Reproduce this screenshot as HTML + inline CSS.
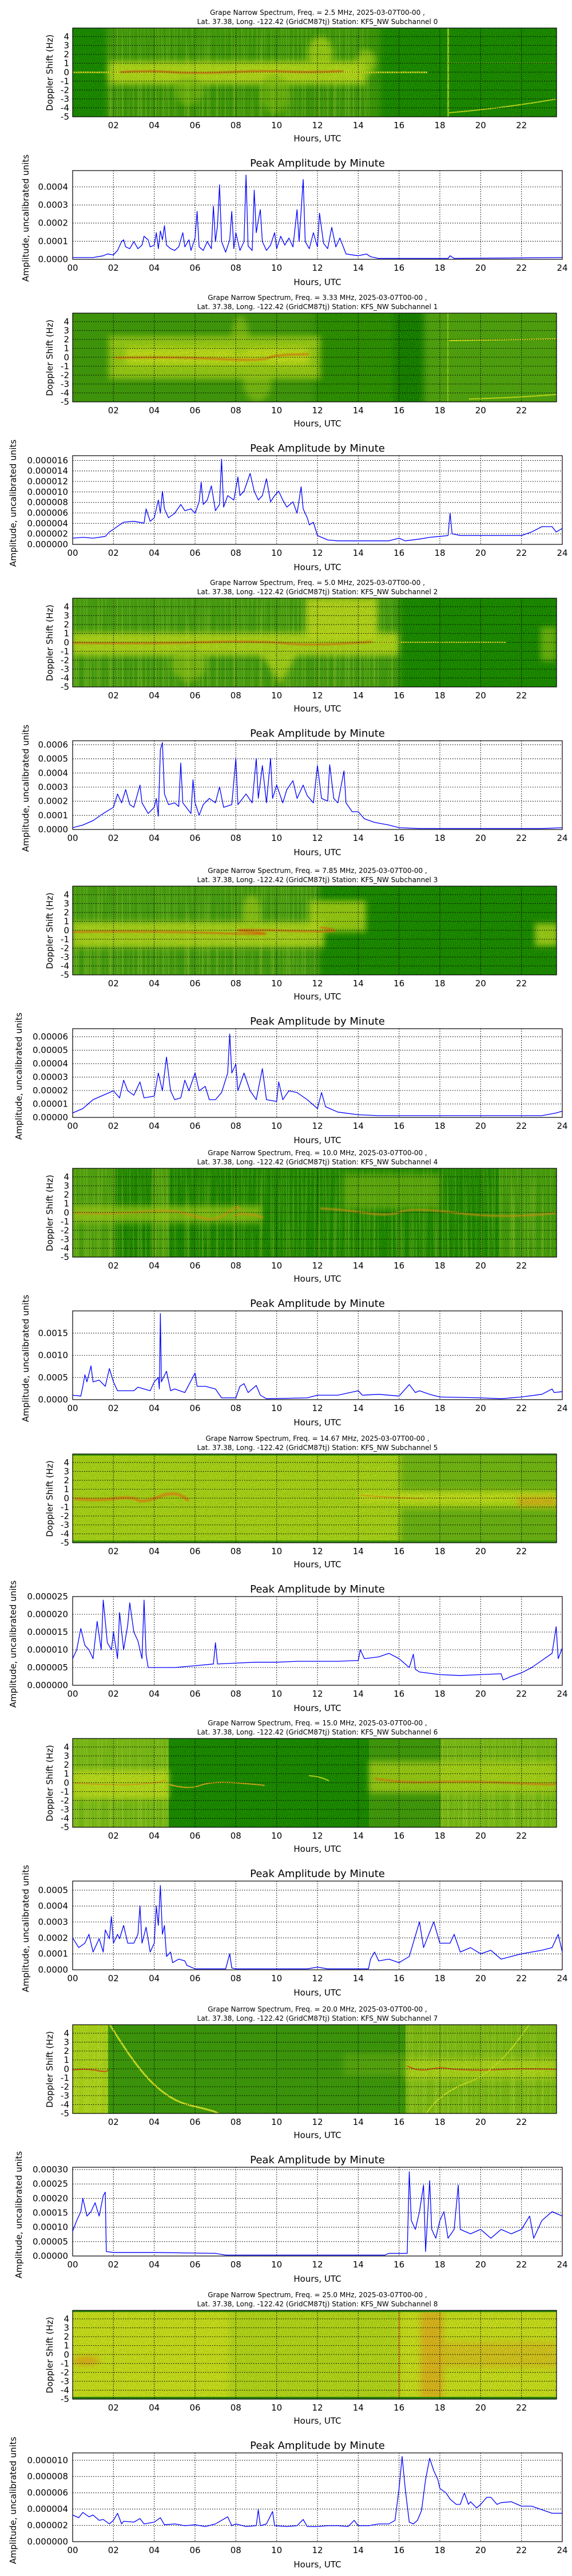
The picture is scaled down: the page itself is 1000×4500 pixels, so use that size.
<!DOCTYPE html>
<html><head><meta charset="utf-8"><style>
html,body{margin:0;padding:0;background:#fff;width:1000px;height:4500px;overflow:hidden}
svg text{font-family:"DejaVu Sans","Liberation Sans",sans-serif;fill:#000}
.tt{font-size:12px;text-anchor:middle}
.tk{font-size:15px}
.tm{font-size:15px;text-anchor:middle}
.te{font-size:15px;text-anchor:end}
.pt{font-size:18px;text-anchor:middle}
.gd{stroke:#000;stroke-width:1.1;stroke-dasharray:1.5,2.5;fill:none}
.fr{fill:none;stroke:#000;stroke-width:1.2}
.ln{fill:none;stroke:#0000ff;stroke-width:1.3;vector-effect:non-scaling-stroke;stroke-linejoin:round}
.st{filter:url(#s);opacity:.3}
</style></head><body>
<svg width="1000" height="4500" viewBox="0 0 1000 4500" xmlns="http://www.w3.org/2000/svg">
<defs>
<clipPath id="sc" clipPathUnits="userSpaceOnUse"><rect x="127" y="0" width="846" height="155"/></clipPath>
<filter id="b" x="-20%" y="-50%" width="140%" height="200%"><feGaussianBlur stdDeviation="5"/></filter>
<filter id="b2" x="-20%" y="-50%" width="140%" height="200%"><feGaussianBlur stdDeviation="1.2"/></filter>
<filter id="n" x="0" y="0" width="1" height="1"><feTurbulence type="fractalNoise" baseFrequency="0.8" numOctaves="2" seed="3"/><feColorMatrix type="matrix" values="0 0 0 0 0.05  0 0 0 0 0.42  0 0 0 0 0  5 0 0 0 -2.2"/></filter>
<filter id="s" x="0" y="0" width="1" height="1"><feTurbulence type="fractalNoise" baseFrequency="0.45 0.004" numOctaves="2" seed="7"/><feColorMatrix type="matrix" values="0 0 0 0 0.85  0 0 0 0 0.88  0 0 0 0 0.1  5 0 0 0 -2.4"/><feGaussianBlur stdDeviation="0.6"/></filter>
<g id="sgrid">
<path class="gd" d="M198.3 0V155M269.7 0V155M341 0V155M412.3 0V155M483.7 0V155M555 0V155M626.3 0V155M697.7 0V155M769 0V155M840.3 0V155M911.7 0V155M127 139.4H973M127 123.8H973M127 108.3H973M127 92.7H973M127 77.1H973M127 61.5H973M127 45.9H973M127 30.4H973M127 14.8H973"/>
<rect class="fr" x="127" y="0" width="846" height="155"/>
<text class="te" x="121" y="20">4</text><text class="te" x="121" y="35.5">3</text><text class="te" x="121" y="51">2</text><text class="te" x="121" y="66.7">1</text><text class="te" x="121" y="82.3">0</text><text class="te" x="121" y="97.9">-1</text><text class="te" x="121" y="113.5">-2</text><text class="te" x="121" y="129">-3</text><text class="te" x="121" y="144.6">-4</text><text class="te" x="121" y="160.2">-5</text>
<text class="tm" x="198.3" y="175">02</text><text class="tm" x="269.7" y="175">04</text><text class="tm" x="341" y="175">06</text><text class="tm" x="412.3" y="175">08</text><text class="tm" x="483.7" y="175">10</text><text class="tm" x="555" y="175">12</text><text class="tm" x="626.3" y="175">14</text><text class="tm" x="697.7" y="175">16</text><text class="tm" x="769" y="175">18</text><text class="tm" x="840.3" y="175">20</text><text class="tm" x="911.7" y="175">22</text>
<text class="tm" x="555" y="198">Hours, UTC</text>
<text class="tk" text-anchor="middle" transform="translate(92,78) rotate(-90)">Doppler Shift (Hz)</text>
<text class="pt" x="555" y="242">Peak Amplitude by Minute</text>
<path class="gd" d="M198.3 249V404M269.7 249V404M341 249V404M412.3 249V404M483.7 249V404M555 249V404M626.3 249V404M697.7 249V404M769 249V404M840.3 249V404M911.7 249V404"/>
<text class="tm" x="127" y="424">00</text><text class="tm" x="198.3" y="424">02</text><text class="tm" x="269.7" y="424">04</text><text class="tm" x="341" y="424">06</text><text class="tm" x="412.3" y="424">08</text><text class="tm" x="483.7" y="424">10</text><text class="tm" x="555" y="424">12</text><text class="tm" x="626.3" y="424">14</text><text class="tm" x="697.7" y="424">16</text><text class="tm" x="769" y="424">18</text><text class="tm" x="840.3" y="424">20</text><text class="tm" x="911.7" y="424">22</text><text class="tm" x="983" y="424">24</text>
<text class="tm" x="555" y="449">Hours, UTC</text>
</g>
</defs>

<!-- ============ CH0 ============ -->
<g transform="translate(0,49)">
<text class="tt" x="555" y="-23">Grape Narrow Spectrum, Freq. = 2.5 MHz, 2025-03-07T00-00 ,</text>
<text class="tt" x="555" y="-7">Lat.  37.38, Long. -122.42 (GridCM87tj) Station: KFS_NW Subchannel 0</text>
<g clip-path="url(#sc)">
<rect x="127" y="0" width="846" height="155" fill="#127b00"/>
<rect x="185" y="-10" width="480" height="175" fill="#3f8f0e" filter="url(#b)" opacity=".85"/>
<rect x="186" y="0" width="460" height="155" class="st"/>
<rect x="190" y="58" width="450" height="40" fill="#d4df22" filter="url(#b)" opacity=".85"/>
<ellipse cx="560" cy="45" rx="22" ry="30" fill="#b8d21c" filter="url(#b)" opacity=".8"/>
<ellipse cx="640" cy="60" rx="18" ry="22" fill="#b8d21c" filter="url(#b)" opacity=".7"/>
<ellipse cx="330" cy="110" rx="25" ry="25" fill="#8cbc18" filter="url(#b)" opacity=".6"/>
<ellipse cx="480" cy="115" rx="25" ry="35" fill="#8cbc18" filter="url(#b)" opacity=".6"/>
<rect x="127" y="76" width="620" height="2.5" fill="#f2f228"/>
<path d="M210 77 Q260 74 300 77 T400 77 T500 76 T600 75" stroke="#e84a10" stroke-width="2.5" fill="none" filter="url(#b2)"/>
<rect x="782" y="0" width="3" height="155" fill="#c6d820" opacity=".8"/>
<path d="M785 148 Q880 140 973 124" stroke="#c8d420" stroke-width="2" fill="none"/>
<path d="M780 61 L973 61" stroke="#9cc21a" stroke-width="1" fill="none" opacity=".6"/>
<rect x="127" y="0" width="846" height="155" fill="#000" filter="url(#n)" opacity=".5"/>
</g>
<use href="#sgrid"/>
<path class="gd" d="M127 372.4H983M127 340.7H983M127 309.1H983M127 277.5H983"/>
<rect class="fr" x="127" y="249" width="856" height="155"/>
<text class="te" x="119" y="409">0.0000</text><text class="te" x="119" y="377.4">0.0001</text><text class="te" x="119" y="345.7">0.0002</text><text class="te" x="119" y="314.1">0.0003</text><text class="te" x="119" y="282.5">0.0004</text>
<text class="tk" text-anchor="middle" transform="translate(50,332) rotate(-90)">Amplitude, uncalibrated units</text>
<polyline class="ln" transform="translate(127,404) scale(35.667,-155)" points="0,.02 1,.02 1.5,.04 1.7,.06 2,.05 2.2,.1 2.4,.2 2.5,.22 2.6,.14 2.8,.12 3,.2 3.2,.12 3.4,.16 3.5,.26 3.7,.22 3.8,.14 4,.16 4.1,.3 4.2,.12 4.3,.32 4.4,.22 4.5,.38 4.6,.16 4.8,.12 5,.1 5.2,.14 5.4,.3 5.5,.14 5.7,.22 5.8,.1 6,.24 6.1,.54 6.2,.14 6.4,.1 6.6,.2 6.8,.12 6.9,.6 7,.2 7.1,.38 7.2,.84 7.3,.2 7.5,.08 7.7,.22 7.8,.54 7.9,.12 8,.3 8.2,.1 8.4,.2 8.5,.95 8.6,.15 8.8,.1 8.9,.78 9,.3 9.1,.44 9.2,.56 9.3,.2 9.5,.1 9.7,.16 9.9,.3 10,.12 10.2,.26 10.4,.16 10.6,.24 10.8,.14 11,.56 11.1,.2 11.3,.9 11.4,.2 11.6,.12 11.8,.3 12,.14 12.1,.52 12.3,.18 12.5,.12 12.7,.36 12.9,.14 13.1,.24 13.3,.12 13.4,.06 14,.04 14.4,.06 14.6,.03 15,.01 18.4,.01 18.5,.04 18.7,.01 24,.02"/>
</g>

<!-- ============ CH1 ============ -->
<g transform="translate(0,547)">
<text class="tt" x="555" y="-23">Grape Narrow Spectrum, Freq. = 3.33 MHz, 2025-03-07T00-00 ,</text>
<text class="tt" x="555" y="-7">Lat.  37.38, Long. -122.42 (GridCM87tj) Station: KFS_NW Subchannel 1</text>
<g clip-path="url(#sc)">
<rect x="127" y="0" width="846" height="155" fill="#3e8c0e"/>
<rect x="550" y="-10" width="150" height="175" fill="#237f04" filter="url(#b)" opacity=".8"/>
<rect x="690" y="-10" width="50" height="175" fill="#0c6e00" filter="url(#b)"/>
<rect x="745" y="-10" width="230" height="175" fill="#5ea014" filter="url(#b)" opacity=".6"/>
<rect x="190" y="40" width="370" height="75" fill="#b4cf1c" filter="url(#b)" opacity=".85"/>
<rect x="220" y="60" width="320" height="30" fill="#dfe024" filter="url(#b)" opacity=".8"/>
<ellipse cx="450" cy="120" rx="25" ry="35" fill="#a8c81c" filter="url(#b)" opacity=".6"/>
<ellipse cx="420" cy="40" rx="15" ry="35" fill="#a8c81c" filter="url(#b)" opacity=".6"/>
<path d="M200 78 Q300 76 380 80 T470 78 T540 72" stroke="#f06a10" stroke-width="3" fill="none" filter="url(#b2)"/>
<rect x="782" y="0" width="2" height="155" fill="#c6d820" opacity=".7"/>
<path d="M785 48 L973 45" stroke="#e6e020" stroke-width="2" fill="none"/>
<path d="M820 150 Q900 148 973 142" stroke="#d6dc20" stroke-width="2" fill="none"/>
<rect x="127" y="0" width="846" height="155" fill="#000" filter="url(#n)" opacity=".55"/>
</g>
<use href="#sgrid"/>
<path class="gd" d="M127 385.7H983M127 367.3H983M127 349H983M127 330.7H983M127 312.3H983M127 294H983M127 275.7H983M127 257.4H983"/>
<rect class="fr" x="127" y="249" width="856" height="155"/>
<text class="te" x="119" y="409">0.000000</text><text class="te" x="119" y="390.7">0.000002</text><text class="te" x="119" y="372.3">0.000004</text><text class="te" x="119" y="354">0.000006</text><text class="te" x="119" y="335.7">0.000008</text><text class="te" x="119" y="317.3">0.000010</text><text class="te" x="119" y="299">0.000012</text><text class="te" x="119" y="280.7">0.000014</text><text class="te" x="119" y="262.4">0.000016</text>
<text class="tk" text-anchor="middle" transform="translate(28,332) rotate(-90)">Amplitude, uncalibrated units</text>
<polyline class="ln" transform="translate(127,404) scale(35.667,-155)" points="0,.07 .5,.08 1,.07 1.6,.09 1.8,.14 2,.17 2.3,.22 2.5,.25 3,.26 3.5,.24 3.6,.4 3.8,.26 4,.3 4.2,.5 4.3,.35 4.4,.6 4.5,.4 4.7,.3 5,.35 5.3,.45 5.5,.38 5.8,.4 6,.35 6.2,.48 6.3,.7 6.4,.45 6.6,.5 6.8,.66 7,.38 7.2,.45 7.3,.96 7.4,.42 7.6,.55 7.9,.5 8.1,.76 8.2,.55 8.4,.6 8.7,.8 8.9,.6 9.1,.5 9.3,.55 9.5,.74 9.7,.48 9.9,.55 10.1,.6 10.3,.5 10.5,.42 10.8,.48 11,.35 11.2,.65 11.3,.4 11.5,.3 11.6,.22 11.8,.25 12,.1 12.5,.05 13,.04 15.5,.04 16,.07 16.3,.04 17,.06 17.5,.08 18,.09 18.4,.1 18.5,.35 18.6,.12 19,.1 20,.1 21,.1 22,.1 22.5,.14 23,.2 23.5,.2 23.7,.14 24,.18"/>
</g>

<!-- ============ CH2 ============ -->
<g transform="translate(0,1045)">
<text class="tt" x="555" y="-23">Grape Narrow Spectrum, Freq. = 5.0 MHz, 2025-03-07T00-00 ,</text>
<text class="tt" x="555" y="-7">Lat.  37.38, Long. -122.42 (GridCM87tj) Station: KFS_NW Subchannel 2</text>
<g clip-path="url(#sc)">
<rect x="127" y="0" width="846" height="155" fill="#127b00"/>
<rect x="120" y="-10" width="580" height="175" fill="#4a9412" filter="url(#b)" opacity=".85"/>
<rect x="127" y="0" width="560" height="155" class="st"/>
<rect x="127" y="60" width="570" height="40" fill="#d6df22" filter="url(#b)" opacity=".8"/>
<rect x="535" y="0" width="125" height="70" fill="#d8dc22" filter="url(#b)" opacity=".85"/>
<path d="M455 95 L490 150 L520 95 Z" fill="#c8d820" filter="url(#b)" opacity=".8"/>
<ellipse cx="330" cy="115" rx="30" ry="30" fill="#a8c81c" filter="url(#b)" opacity=".6"/>
<path d="M127 78 Q250 80 350 77 T500 79 T650 76" stroke="#f05a10" stroke-width="2.5" fill="none" filter="url(#b2)"/>
<rect x="655" y="76" width="230" height="2" fill="#e6e626"/>
<rect x="945" y="50" width="28" height="60" fill="#a8c81c" filter="url(#b)" opacity=".6"/>
<rect x="127" y="0" width="846" height="155" fill="#000" filter="url(#n)" opacity=".5"/>
</g>
<use href="#sgrid"/>
<path class="gd" d="M127 379.3H983M127 354.6H983M127 330H983M127 305.3H983M127 280.6H983M127 255.9H983"/>
<rect class="fr" x="127" y="249" width="856" height="155"/>
<text class="te" x="119" y="409">0.0000</text><text class="te" x="119" y="384.3">0.0001</text><text class="te" x="119" y="359.6">0.0002</text><text class="te" x="119" y="335">0.0003</text><text class="te" x="119" y="310.3">0.0004</text><text class="te" x="119" y="285.6">0.0005</text><text class="te" x="119" y="260.9">0.0006</text>
<text class="tk" text-anchor="middle" transform="translate(50,332) rotate(-90)">Amplitude, uncalibrated units</text>
<polyline class="ln" transform="translate(127,404) scale(35.667,-155)" points="0,.02 .5,.05 1,.1 1.5,.18 2,.25 2.2,.4 2.4,.3 2.6,.45 2.8,.28 3,.25 3.3,.5 3.4,.3 3.7,.18 4,.25 4.1,.35 4.2,.15 4.3,.9 4.4,.98 4.5,.4 4.7,.28 5,.3 5.2,.26 5.3,.75 5.4,.3 5.8,.18 5.9,.56 6,.3 6.2,.16 6.4,.28 6.7,.35 7,.3 7.2,.48 7.4,.25 7.8,.28 8,.8 8.1,.28 8.5,.4 8.8,.3 9,.8 9.1,.35 9.3,.72 9.5,.3 9.7,.8 9.8,.35 10,.5 10.3,.3 10.5,.45 10.8,.55 11,.35 11.3,.5 11.5,.38 11.8,.3 12,.72 12.2,.35 12.5,.32 12.6,.73 12.8,.35 13,.3 13.3,.66 13.4,.3 13.7,.2 14,.2 14.3,.12 14.8,.08 15.5,.05 16,.02 17,.01 23,.01 24,.02"/>
</g>

<!-- ============ CH3 ============ -->
<g transform="translate(0,1548)">
<text class="tt" x="555" y="-23">Grape Narrow Spectrum, Freq. = 7.85 MHz, 2025-03-07T00-00 ,</text>
<text class="tt" x="555" y="-7">Lat.  37.38, Long. -122.42 (GridCM87tj) Station: KFS_NW Subchannel 3</text>
<g clip-path="url(#sc)">
<rect x="127" y="0" width="846" height="155" fill="#127b00"/>
<rect x="120" y="-10" width="440" height="175" fill="#4a9412" filter="url(#b)" opacity=".85"/>
<rect x="127" y="0" width="430" height="155" class="st"/>
<rect x="127" y="62" width="440" height="45" fill="#d0dc20" filter="url(#b)" opacity=".8"/>
<rect x="540" y="25" width="100" height="55" fill="#c4d61e" filter="url(#b)" opacity=".8"/>
<ellipse cx="440" cy="45" rx="15" ry="30" fill="#b0cc1c" filter="url(#b)" opacity=".7"/>
<path d="M127 80 Q250 78 380 82 T440 80 T500 78 T560 72" stroke="#f05a10" stroke-width="2.5" fill="none" filter="url(#b2)"/>
<rect x="935" y="65" width="40" height="40" fill="#c8d820" filter="url(#b)" opacity=".8"/>
<rect x="127" y="0" width="846" height="155" fill="#000" filter="url(#n)" opacity=".5"/>
</g>
<use href="#sgrid"/>
<path class="gd" d="M127 380.5H983M127 357H983M127 333.6H983M127 310.1H983M127 286.6H983M127 263.1H983"/>
<rect class="fr" x="127" y="249" width="856" height="155"/>
<text class="te" x="119" y="409">0.00000</text><text class="te" x="119" y="385.5">0.00001</text><text class="te" x="119" y="362">0.00002</text><text class="te" x="119" y="338.6">0.00003</text><text class="te" x="119" y="315.1">0.00004</text><text class="te" x="119" y="291.6">0.00005</text><text class="te" x="119" y="268.1">0.00006</text>
<text class="tk" text-anchor="middle" transform="translate(38,332) rotate(-90)">Amplitude, uncalibrated units</text>
<polyline class="ln" transform="translate(127,404) scale(35.667,-155)" points="0,.05 .5,.1 1,.2 1.5,.25 2,.3 2.3,.22 2.5,.42 2.7,.3 3,.25 3.3,.4 3.5,.22 4,.24 4.2,.5 4.4,.3 4.6,.68 4.8,.3 5,.2 5.3,.22 5.5,.42 5.7,.3 6,.5 6.2,.3 6.5,.35 6.7,.2 7,.2 7.3,.28 7.6,.5 7.7,.94 7.8,.5 8,.6 8.1,.3 8.4,.5 8.7,.3 9,.2 9.3,.55 9.5,.2 10,.18 10.1,.4 10.3,.2 10.6,.3 11,.28 11.5,.2 12,.1 12.2,.28 12.4,.12 13,.06 14,.03 15,.02 23,.02 23.7,.05 24,.07"/>
</g>

<!-- ============ CH4 ============ -->
<g transform="translate(0,2041)">
<text class="tt" x="555" y="-23">Grape Narrow Spectrum, Freq. = 10.0 MHz, 2025-03-07T00-00 ,</text>
<text class="tt" x="555" y="-7">Lat.  37.38, Long. -122.42 (GridCM87tj) Station: KFS_NW Subchannel 4</text>
<g clip-path="url(#sc)">
<rect x="127" y="0" width="846" height="155" fill="#147900"/>
<rect x="127" y="0" width="75" height="155" fill="#5a9e14" opacity=".8"/>
<rect x="265" y="0" width="30" height="155" fill="#5a9e14" opacity=".8"/>
<rect x="872" y="0" width="101" height="155" fill="#4c9612" opacity=".8"/>
<rect x="127" y="0" width="846" height="155" class="st"/>
<rect x="127" y="65" width="330" height="30" fill="#b0cc1c" filter="url(#b)" opacity=".7"/>
<rect x="600" y="10" width="170" height="60" fill="#7aae16" filter="url(#b)" opacity=".7"/>
<path d="M130 78 Q200 80 250 76 T320 78 T360 88 T400 76 T420 74 M410 82 Q430 76 460 86 M560 70 Q600 72 640 78 T700 76 T800 78 T973 78" stroke="#e88a18" stroke-width="2.5" fill="none" filter="url(#b2)"/>
<rect x="127" y="0" width="846" height="155" fill="#000" filter="url(#n)" opacity=".5"/>
</g>
<use href="#sgrid"/>
<path class="gd" d="M127 365.3H983M127 326.5H983M127 287.8H983"/>
<rect class="fr" x="127" y="249" width="856" height="155"/>
<text class="te" x="119" y="409">0.0000</text><text class="te" x="119" y="370.3">0.0005</text><text class="te" x="119" y="331.5">0.0010</text><text class="te" x="119" y="292.8">0.0015</text>
<text class="tk" text-anchor="middle" transform="translate(50,332) rotate(-90)">Amplitude, uncalibrated units</text>
<polyline class="ln" transform="translate(127,404) scale(35.667,-155)" points="0,.05 .4,.04 .5,.15 .6,.28 .7,.2 .9,.38 1,.2 1.3,.22 1.6,.15 1.8,.35 2,.2 2.2,.1 2.5,.1 3,.1 3.2,.14 3.5,.12 3.8,.1 4,.2 4.2,.25 4.25,.12 4.3,.97 4.35,.2 4.6,.32 4.8,.1 5,.12 5.5,.08 6,.3 6.1,.15 6.5,.15 7,.12 7.3,.02 8,.02 8.2,.15 8.4,.18 8.6,.08 9,.16 9.2,.05 9.5,.01 11.5,.02 12,.05 13,.05 14,.1 14.2,.05 15,.06 16,.04 16.5,.17 16.8,.08 17,.1 17.5,.06 18,.03 20,.02 21,.01 22,.03 23,.06 23.5,.12 23.6,.08 24,.09"/>
</g>

<!-- ============ CH5 ============ -->
<g transform="translate(0,2540)">
<text class="tt" x="555" y="-23">Grape Narrow Spectrum, Freq. = 14.67 MHz, 2025-03-07T00-00 ,</text>
<text class="tt" x="555" y="-7">Lat.  37.38, Long. -122.42 (GridCM87tj) Station: KFS_NW Subchannel 5</text>
<g clip-path="url(#sc)">
<rect x="127" y="0" width="846" height="155" fill="#b8d01c"/>
<rect x="700" y="-10" width="280" height="75" fill="#6aa616" filter="url(#b)" opacity=".8"/>
<rect x="700" y="95" width="280" height="70" fill="#5ea014" filter="url(#b)" opacity=".8"/>
<rect x="127" y="0" width="846" height="3" fill="#3a8a0c"/>
<rect x="127" y="151" width="846" height="4" fill="#3a8a0c"/>
<rect x="626" y="68" width="347" height="16" fill="#e0e024" filter="url(#b)" opacity=".8"/>
<path d="M130 78 Q170 82 200 78 T240 80 T280 74 T330 82" stroke="#f08018" stroke-width="5" fill="none" filter="url(#b2)"/>
<path d="M630 72 Q680 76 740 78" stroke="#f0a018" stroke-width="2" fill="none"/>
<rect x="905" y="75" width="68" height="16" fill="#f09a1a" filter="url(#b)" opacity=".8"/>
<rect x="127" y="0" width="846" height="155" fill="#000" filter="url(#n)" opacity=".55"/>
</g>
<use href="#sgrid"/>
<path class="gd" d="M127 373H983M127 342H983M127 311H983M127 280H983"/>
<rect class="fr" x="127" y="249" width="856" height="155"/>
<text class="te" x="119" y="409">0.000000</text><text class="te" x="119" y="378">0.000005</text><text class="te" x="119" y="347">0.000010</text><text class="te" x="119" y="316">0.000015</text><text class="te" x="119" y="285">0.000020</text><text class="te" x="119" y="254">0.000025</text>
<text class="tk" text-anchor="middle" transform="translate(28,332) rotate(-90)">Amplitude, uncalibrated units</text>
<polyline class="ln" transform="translate(127,404) scale(35.667,-155)" points="0,.3 .2,.4 .4,.64 .6,.45 .8,.4 1,.3 1.2,.72 1.4,.4 1.5,.96 1.7,.48 1.9,.4 2,.6 2.2,.3 2.3,.82 2.5,.4 2.7,.68 2.8,.93 3,.6 3.2,.5 3.4,.3 3.5,.96 3.6,.35 3.7,.2 4,.2 5,.2 6,.22 6.9,.24 7,.48 7.1,.24 8,.25 9,.26 10,.26 11,.27 12,.27 13,.27 14,.28 14.1,.4 14.3,.3 15,.32 15.5,.36 16,.3 16.5,.2 16.7,.35 16.8,.18 17,.15 18,.12 19,.11 20,.12 21,.13 21.1,.06 21.5,.1 22,.14 22.5,.2 23,.28 23.5,.36 23.7,.66 23.8,.3 24,.42"/>
</g>

<!-- ============ CH6 ============ -->
<g transform="translate(0,3037)">
<text class="tt" x="555" y="-23">Grape Narrow Spectrum, Freq. = 15.0 MHz, 2025-03-07T00-00 ,</text>
<text class="tt" x="555" y="-7">Lat.  37.38, Long. -122.42 (GridCM87tj) Station: KFS_NW Subchannel 6</text>
<g clip-path="url(#sc)">
<rect x="127" y="0" width="846" height="155" fill="#127b00"/>
<rect x="127" y="0" width="168" height="155" fill="#7cb218"/>
<rect x="645" y="0" width="125" height="155" fill="#3e8e0e"/>
<rect x="770" y="0" width="203" height="155" fill="#7cb218"/>
<rect x="127" y="0" width="168" height="155" class="st"/>
<rect x="770" y="0" width="203" height="155" class="st"/>
<rect x="127" y="55" width="168" height="50" fill="#d8e024" filter="url(#b)" opacity=".8"/>
<rect x="645" y="40" width="328" height="55" fill="#c0d41e" filter="url(#b)" opacity=".75"/>
<path d="M130 78 Q200 82 240 80 T290 72 M295 80 Q330 90 350 82 T420 78 T460 82" stroke="#e8a018" stroke-width="2" fill="none"/>
<path d="M655 70 Q700 78 760 76 T900 78 T973 78" stroke="#f06018" stroke-width="2.5" fill="none" filter="url(#b2)"/>
<path d="M540 65 Q560 66 575 74" stroke="#c8d820" stroke-width="2" fill="none"/>
<rect x="127" y="0" width="846" height="155" fill="#000" filter="url(#n)" opacity=".5"/>
</g>
<use href="#sgrid"/>
<path class="gd" d="M127 376.2H983M127 348.3H983M127 320.5H983M127 292.7H983M127 264.9H983"/>
<rect class="fr" x="127" y="249" width="856" height="155"/>
<text class="te" x="119" y="409">0.0000</text><text class="te" x="119" y="381.2">0.0001</text><text class="te" x="119" y="353.3">0.0002</text><text class="te" x="119" y="325.5">0.0003</text><text class="te" x="119" y="297.7">0.0004</text><text class="te" x="119" y="269.9">0.0005</text>
<text class="tk" text-anchor="middle" transform="translate(50,332) rotate(-90)">Amplitude, uncalibrated units</text>
<polyline class="ln" transform="translate(127,404) scale(35.667,-155)" points="0,.36 .3,.25 .6,.3 .8,.4 1,.2 1.3,.35 1.5,.2 1.6,.45 1.8,.35 1.9,.6 2,.3 2.2,.4 2.3,.35 2.5,.5 2.7,.3 3,.3 3.2,.4 3.3,.72 3.4,.3 3.6,.48 3.8,.2 4,.3 4.1,.72 4.2,.5 4.3,.95 4.4,.4 4.5,.5 4.6,.15 4.8,.2 4.9,.08 5.2,.12 5.5,.1 5.6,.05 6,.01 7.5,.01 7.7,.18 7.8,.02 8,.01 11.5,.01 12,.03 12.5,.01 14.5,.01 14.6,.12 14.8,.2 15,.1 15.5,.12 16,.08 16.5,.15 17,.54 17.2,.25 17.7,.54 18,.3 18.5,.3 18.7,.4 19,.2 19.5,.25 20,.18 20.5,.22 21,.12 21.5,.15 22,.18 22.5,.2 23,.22 23.5,.25 23.8,.4 24,.2"/>
</g>

<!-- ============ CH7 ============ -->
<g transform="translate(0,3537)">
<text class="tt" x="555" y="-23">Grape Narrow Spectrum, Freq. = 20.0 MHz, 2025-03-07T00-00 ,</text>
<text class="tt" x="555" y="-7">Lat.  37.38, Long. -122.42 (GridCM87tj) Station: KFS_NW Subchannel 7</text>
<g clip-path="url(#sc)">
<rect x="127" y="0" width="846" height="155" fill="#3a8c0e"/>
<rect x="127" y="0" width="62" height="155" fill="#b8d01c"/>
<rect x="127" y="0" width="62" height="155" class="st"/>
<rect x="600" y="50" width="110" height="40" fill="#6aa616" filter="url(#b)" opacity=".6"/>
<rect x="709" y="0" width="264" height="155" fill="#8cb818" opacity=".9"/>
<rect x="709" y="0" width="264" height="155" class="st"/>
<rect x="709" y="60" width="264" height="35" fill="#d8e024" filter="url(#b)" opacity=".6"/>
<path d="M127 79 Q150 76 170 80 T189 78" stroke="#e83a18" stroke-width="2" fill="none"/>
<path d="M712 72 Q730 82 750 78 T780 76 T820 79 T880 78 T973 78" stroke="#e84a18" stroke-width="2" fill="none"/>
<path d="M192 0 C230 60 270 125 330 140 S370 150 385 157" stroke="#e0e028" stroke-width="3" fill="none"/>
<path d="M745 155 Q770 118 820 100 T925 0" stroke="#d8e024" stroke-width="2" fill="none"/>
<rect x="127" y="0" width="846" height="155" fill="#000" filter="url(#n)" opacity=".5"/>
</g>
<use href="#sgrid"/>
<path class="gd" d="M127 378.8H983M127 353.7H983M127 328.5H983M127 303.4H983M127 278.2H983M127 253.1H983"/>
<rect class="fr" x="127" y="249" width="856" height="155"/>
<text class="te" x="119" y="409">0.00000</text><text class="te" x="119" y="383.8">0.00005</text><text class="te" x="119" y="358.7">0.00010</text><text class="te" x="119" y="333.5">0.00015</text><text class="te" x="119" y="308.4">0.00020</text><text class="te" x="119" y="283.2">0.00025</text><text class="te" x="119" y="258.1">0.00030</text>
<text class="tk" text-anchor="middle" transform="translate(38,332) rotate(-90)">Amplitude, uncalibrated units</text>
<polyline class="ln" transform="translate(127,404) scale(35.667,-155)" points="0,.28 .2,.4 .4,.5 .5,.65 .7,.45 .9,.5 1.1,.6 1.3,.45 1.5,.68 1.6,.72 1.65,.05 2,.04 4,.04 7,.03 7.5,.01 15.3,.01 15.5,.03 16.4,.03 16.5,.95 16.6,.4 16.8,.3 17,.5 17.2,.8 17.3,.05 17.5,.85 17.6,.3 17.8,.2 18,.4 18.2,.5 18.4,.2 18.7,.3 18.9,.8 19,.3 19.5,.25 20,.3 20.5,.2 21,.3 21.5,.25 22,.3 22.4,.45 22.6,.2 23,.4 23.5,.5 24,.45"/>
</g>

<!-- ============ CH8 ============ -->
<g transform="translate(0,4036)">
<text class="tt" x="555" y="-23">Grape Narrow Spectrum, Freq. = 25.0 MHz, 2025-03-07T00-00 ,</text>
<text class="tt" x="555" y="-7">Lat.  37.38, Long. -122.42 (GridCM87tj) Station: KFS_NW Subchannel 8</text>
<g clip-path="url(#sc)">
<rect x="127" y="0" width="846" height="155" fill="#d6da20"/>
<rect x="400" y="-10" width="300" height="175" fill="#b8cc1e" filter="url(#b)" opacity=".7"/>
<rect x="735" y="0" width="40" height="155" fill="#f0a420" filter="url(#b)" opacity=".85"/>
<rect x="770" y="55" width="203" height="45" fill="#f0a420" filter="url(#b)" opacity=".55"/>
<rect x="696" y="0" width="4" height="155" fill="#f0a020" opacity=".8"/>
<ellipse cx="150" cy="88" rx="25" ry="8" fill="#f0941c" filter="url(#b)" opacity=".8"/>
<rect x="127" y="0" width="846" height="155" fill="#000" filter="url(#n)" opacity=".45"/>
<rect x="127" y="0" width="846" height="3" fill="#2c840a"/>
<rect x="127" y="151" width="846" height="4" fill="#2c840a"/>
</g>
<use href="#sgrid"/>
<path class="gd" d="M127 375.6H983M127 347.1H983M127 318.7H983M127 290.2H983M127 261.8H983"/>
<rect class="fr" x="127" y="249" width="856" height="155"/>
<text class="te" x="119" y="409">0.000000</text><text class="te" x="119" y="380.6">0.000002</text><text class="te" x="119" y="352.1">0.000004</text><text class="te" x="119" y="323.7">0.000006</text><text class="te" x="119" y="295.2">0.000008</text><text class="te" x="119" y="266.8">0.000010</text>
<text class="tk" text-anchor="middle" transform="translate(28,332) rotate(-90)">Amplitude, uncalibrated units</text>
<polyline class="ln" transform="translate(127,404) scale(35.667,-155)" points="0,.3 .3,.27 .5,.33 .8,.28 1,.3 1.3,.24 1.5,.25 1.8,.2 2,.24 2.2,.32 2.4,.2 2.5,.23 3,.22 3.3,.26 3.5,.2 4,.22 4.3,.27 4.5,.19 5,.2 5.5,.18 6,.19 6.5,.17 7,.2 7.6,.28 7.8,.18 8,.2 8.5,.17 9,.18 9.1,.36 9.2,.18 9.5,.2 9.8,.34 9.9,.18 10.5,.17 11,.18 11.3,.25 11.5,.17 12,.17 12.5,.18 13,.18 13.5,.17 13.8,.24 14,.18 14.5,.18 15,.2 15.5,.2 15.8,.24 16,.6 16.15,.96 16.3,.6 16.5,.22 16.7,.2 16.9,.24 17.1,.35 17.3,.7 17.5,.94 17.7,.8 17.9,.7 18,.6 18.3,.55 18.5,.48 18.8,.42 19,.42 19.2,.55 19.4,.42 19.5,.45 19.8,.38 20,.42 20.3,.5 20.5,.5 20.8,.42 21,.44 21.5,.45 22,.4 22.5,.4 23,.36 23.5,.32 24,.32"/>
</g>
</svg>
</body></html>
